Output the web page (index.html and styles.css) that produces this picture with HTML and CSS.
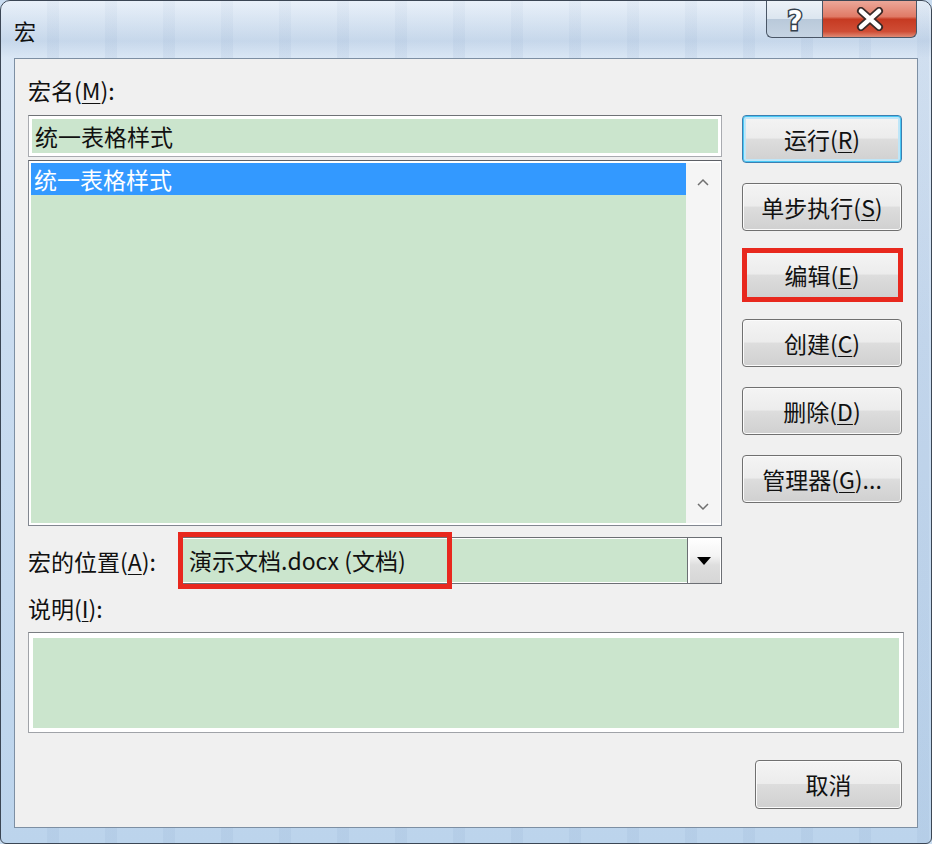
FILE: index.html
```html
<!DOCTYPE html>
<html lang="zh-CN">
<head>
    <meta charset="UTF-8">
    <meta name="viewport" content="width=device-width, initial-scale=1.0">
    <title>宏</title>
    <link rel="stylesheet" href="styles.css">
</head>
<body>
    <div class="window">
        <div class="titlebar">
            <span class="title">宏</span>
            <div class="caption-buttons">
                <div class="cap-btn help">
                    <svg class="cap-icon" width="26" height="34" viewBox="0 0 26 34">
                        <text x="13" y="28" text-anchor="middle" class="cap-glyph">?</text>
                    </svg>
                </div>
                <div class="cap-btn close">
                    <svg width="30" height="24" viewBox="0 0 30 24">
                        <path d="M6 4 L24 20 M24 4 L6 20" stroke="#3a2a28" stroke-width="8" stroke-linecap="round"/>
                        <path d="M6 4 L24 20 M24 4 L6 20" stroke="#ffffff" stroke-width="4.5" stroke-linecap="round"/>
                    </svg>
                </div>
            </div>
        </div>

        <div class="client">
            <div class="top">
                <div class="left">
                    <div class="label">宏名(<u>M</u>):</div>
                    <div class="textbox">
                        <div class="fill">统一表格样式</div>
                    </div>
                    <div class="listbox">
                        <div class="list-items">
                            <div class="item selected">统一表格样式</div>
                        </div>
                        <div class="scrollbar">
                            <svg width="12" height="8" viewBox="0 0 12 8">
                                <path d="M1 7 L6 2 L11 7" fill="none" stroke="#707070" stroke-width="1.5"/>
                            </svg>
                            <svg width="12" height="8" viewBox="0 0 12 8">
                                <path d="M1 1 L6 6 L11 1" fill="none" stroke="#707070" stroke-width="1.5"/>
                            </svg>
                        </div>
                    </div>
                </div>
                <div class="side-buttons">
                    <div class="btn default">运行(<u>R</u>)</div>
                    <div class="btn">单步执行(<u>S</u>)</div>
                    <div class="btn marked">编辑(<u>E</u>)</div>
                    <div class="btn">创建(<u>C</u>)</div>
                    <div class="btn">删除(<u>D</u>)</div>
                    <div class="btn">管理器(<u>G</u>)...</div>
                </div>
            </div>

            <div class="location-row">
                <div class="label location-label">宏的位置(<u>A</u>):</div>
                <div class="combo">
                    <div class="combo-value">演示文档.docx (文档)</div>
                    <div class="combo-arrow">
                        <svg width="14" height="8" viewBox="0 0 14 8">
                            <path d="M0 0 L14 0 L7 8 Z" fill="#000"/>
                        </svg>
                    </div>
                    <div class="mark combo-mark"></div>
                </div>
            </div>

            <div class="label desc-label">说明(<u>I</u>):</div>
            <div class="desc">
                <div class="fill"></div>
            </div>

            <div class="footer">
                <div class="btn cancel">取消</div>
            </div>
        </div>
    </div>
</body>
</html>
```

FILE: styles.css
```css
body {
    margin: 0;
    font-family: "Noto Sans CJK SC", "Noto Sans", sans-serif;
    background-color: #c9dcf0;
    color: #111;
}

.window {
    box-sizing: border-box;
    width: 932px;
    height: 844px;
    border: 1px solid #3b4654;
    border-radius: 10px 10px 6px 6px;
    background:
        repeating-linear-gradient(90deg, rgba(255, 255, 255, 0) 0 46px, rgba(120, 150, 190, 0.1) 46px 58px),
        linear-gradient(to bottom, #dde9f6, #cadcf0 40%, #bcd4ec);
    display: flex;
    flex-direction: column;
    overflow: hidden;
}

.titlebar {
    height: 57px;
    display: flex;
    align-items: center;
    padding-left: 13px;
    background: linear-gradient(to bottom, rgba(255, 255, 255, 0.35), rgba(160, 185, 215, 0.35) 70%, rgba(255, 255, 255, 0));
}

.title {
    font-size: 22px;
    line-height: 26px;
}

.caption-buttons {
    display: flex;
    align-self: flex-start;
    margin-left: auto;
    margin-right: 14px;
    margin-top: -1px;
}

.cap-btn {
    box-sizing: border-box;
    height: 38px;
    display: flex;
    align-items: center;
    justify-content: center;
    border: 1px solid #4a5666;
    border-top: none;
}

.cap-icon {
    overflow: visible;
}

.help {
    width: 56px;
    border-radius: 0 0 0 6px;
    border-right: none;
    background: linear-gradient(to bottom, #eef3f8 0%, #dce6f0 50%, #b9c9da 52%, #c6d4e3 100%);
}

.close {
    width: 95px;
    border-radius: 0 0 6px 0;
    background: linear-gradient(to bottom, #ecaa9c 0%, #e07a66 45%, #c63a22 52%, #cf4d35 85%, #e08a74 100%);
}

.cap-glyph {
    font-family: "DejaVu Sans", sans-serif;
    font-size: 26px;
    font-weight: bold;
    fill: #ffffff;
    stroke: #34404c;
    stroke-width: 3px;
    paint-order: stroke;
}

.client {
    box-sizing: border-box;
    width: 904px;
    height: 770px;
    margin-left: 13px;
    background-color: #f0f0f0;
    border: 1px solid #7d8fa3;
    padding: 19px 13px 0 13px;
}

.label {
    font-size: 23px;
    line-height: 24px;
    height: 24px;
    white-space: nowrap;
}

u {
    text-decoration-thickness: 1px;
    text-underline-offset: 3px;
}

.top {
    display: flex;
    gap: 20px;
}

.left {
    width: 694px;
}

.left .label {
    margin-bottom: 13px;
}

.textbox {
    box-sizing: border-box;
    height: 42px;
    border: 1px solid #a9abb0;
    border-top-color: #6f7276;
    background-color: #fff;
    padding: 3px;
}

.fill {
    height: 100%;
    background-color: #cbe5cd;
}

.textbox .fill {
    font-size: 23px;
    line-height: 34px;
    padding-left: 3px;
}

.listbox {
    box-sizing: border-box;
    height: 366px;
    margin-top: 3px;
    border: 1px solid #828790;
    border-top-color: #5d6066;
    background-color: #fff;
    padding: 2px 1px 2px 2px;
    display: flex;
}

.list-items {
    flex: 1;
    background-color: #cbe5cd;
}

.item {
    height: 32px;
    font-size: 23px;
    line-height: 32px;
    padding-left: 3px;
}

.selected {
    background-color: #3399ff;
    color: #fff;
}

.scrollbar {
    width: 34px;
    background-color: #f5f5f5;
    display: flex;
    flex-direction: column;
    align-items: center;
    justify-content: space-between;
    padding: 15px 0 12px;
    box-sizing: border-box;
}

.side-buttons {
    width: 160px;
    padding-top: 37px;
    display: flex;
    flex-direction: column;
    gap: 20px;
}

.btn {
    position: relative;
    box-sizing: border-box;
    height: 48px;
    border: 1px solid #707070;
    border-radius: 4px;
    background: linear-gradient(to bottom, #f4f4f4 0%, #ececec 48%, #dddddd 50%, #d0d0d0 100%);
    box-shadow: inset 0 0 0 1px #fbfbfb;
    font-size: 23px;
    line-height: 46px;
    text-align: center;
    white-space: nowrap;
}

.default {
    border-color: #3c7fb1;
    box-shadow: inset 0 0 0 1px #48c8f5, inset 0 0 0 3px #bfe6f8;
}

.marked::after,
.mark {
    content: "";
    position: absolute;
    border: 5px solid #e8281e;
    pointer-events: none;
}

.marked::after {
    top: -4px;
    bottom: -4px;
    left: -1px;
    right: -2px;
}

.location-row {
    display: flex;
    align-items: center;
    margin-top: 11px;
}

.location-label {
    width: 152px;
}

.combo {
    position: relative;
    box-sizing: border-box;
    width: 542px;
    height: 47px;
    border: 1px solid #6c6f74;
    background-color: #fff;
    display: flex;
    padding: 1px;
}

.combo-value {
    flex: 1;
    background-color: #cbe5cd;
    font-size: 23px;
    line-height: 43px;
    padding-left: 7px;
}

.combo-arrow {
    width: 32px;
    border-left: 1px solid #6c6f74;
    margin: -1px 0;
    background: linear-gradient(to bottom, #ffffff 0%, #f4f4f4 40%, #dedede 60%, #d6d6d6 100%);
    box-shadow: inset 2px 2px 0 #fff;
    display: flex;
    align-items: center;
    justify-content: center;
}

.combo-mark {
    top: -6px;
    left: -3px;
    width: 274px;
    height: 57px;
    box-sizing: border-box;
}

.desc-label {
    margin-top: 12px;
}

.desc {
    box-sizing: border-box;
    width: 876px;
    height: 101px;
    margin-top: 12px;
    border: 1px solid #a0a3a8;
    border-top-color: #7a7d82;
    background-color: #fff;
    padding: 5px 4px 4px 4px;
}

.footer {
    display: flex;
    justify-content: flex-end;
    margin-top: 27px;
    padding-right: 2px;
}

.cancel {
    width: 147px;
    height: 49px;
}
```
